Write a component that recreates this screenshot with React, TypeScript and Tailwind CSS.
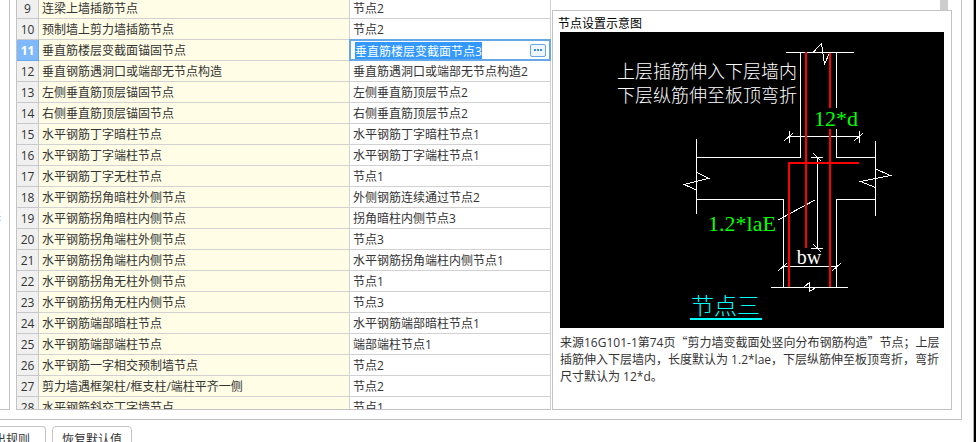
import { ReactNode, useState } from "react";
import clsx from "clsx";

interface NodeRow {
  id: number;
  name: string;
  value: string;
}

const rows: NodeRow[] = [
  { id: 9, name: "连梁上墙插筋节点", value: "节点2" },
  { id: 10, name: "预制墙上剪力墙插筋节点", value: "节点2" },
  { id: 11, name: "垂直筋楼层变截面锚固节点", value: "垂直筋楼层变截面节点3" },
  { id: 12, name: "垂直钢筋遇洞口或端部无节点构造", value: "垂直筋遇洞口或端部无节点构造2" },
  { id: 13, name: "左侧垂直筋顶层锚固节点", value: "左侧垂直筋顶层节点2" },
  { id: 14, name: "右侧垂直筋顶层锚固节点", value: "右侧垂直筋顶层节点2" },
  { id: 15, name: "水平钢筋丁字暗柱节点", value: "水平钢筋丁字暗柱节点1" },
  { id: 16, name: "水平钢筋丁字端柱节点", value: "水平钢筋丁字端柱节点1" },
  { id: 17, name: "水平钢筋丁字无柱节点", value: "节点1" },
  { id: 18, name: "水平钢筋拐角暗柱外侧节点", value: "外侧钢筋连续通过节点2" },
  { id: 19, name: "水平钢筋拐角暗柱内侧节点", value: "拐角暗柱内侧节点3" },
  { id: 20, name: "水平钢筋拐角端柱外侧节点", value: "节点3" },
  { id: 21, name: "水平钢筋拐角端柱内侧节点", value: "水平钢筋拐角端柱内侧节点1" },
  { id: 22, name: "水平钢筋拐角无柱外侧节点", value: "节点1" },
  { id: 23, name: "水平钢筋拐角无柱内侧节点", value: "节点3" },
  { id: 24, name: "水平钢筋端部暗柱节点", value: "水平钢筋端部暗柱节点1" },
  { id: 25, name: "水平钢筋端部端柱节点", value: "端部端柱节点1" },
  { id: 26, name: "水平钢筋一字相交预制墙节点", value: "节点2" },
  { id: 27, name: "剪力墙遇框架柱/框支柱/端柱平齐一侧", value: "节点2" },
  { id: 28, name: "水平钢筋斜交丁字墙节点", value: "节点1" },
];

const SELECTED_ID = 11;

function ValueEditor({ initial }: { initial: string }) {
  const [value, setValue] = useState(initial);

  return (
    <div className="absolute -inset-px flex items-center justify-between border-2 border-[#66a7e8] bg-white pr-[3px] pl-1">
      <input
        aria-label="节点"
        value={value}
        onChange={(e) => setValue(e.target.value)}
        className="field-sizing-content h-[17px] bg-[#3399ff] pt-0.5 leading-[15px] text-white outline-none"
      />
      <button
        type="button"
        aria-label="选择节点"
        className="flex h-[13px] w-4 items-center justify-center gap-px rounded-xs border border-[#66a7e8] bg-[#eef5fd]"
      >
        <span className="h-0.5 w-0.5 bg-[#3d8ee0]" />
        <span className="h-0.5 w-0.5 bg-[#3d8ee0]" />
        <span className="h-0.5 w-0.5 bg-[#3d8ee0]" />
      </button>
    </div>
  );
}

function NodeTable() {
  return (
    <div className="min-w-0 flex-1 overflow-hidden border-b border-l border-[#c3c3c3]">
      {/* scrolled slightly past the top of row 9 */}
      <table className="-mt-0.5 w-full table-fixed border-separate border-spacing-0 leading-[18px]">
        <colgroup>
          <col className="w-[22px]" />
          <col />
          <col className="w-[201px]" />
        </colgroup>
        <tbody>
          {rows.map((row) => {
            const selected = row.id === SELECTED_ID;
            return (
              <tr key={row.id}>
                <th
                  scope="row"
                  className={clsx(
                    "border-r border-b p-0 pt-0.5 text-center",
                    selected
                      ? "border-[#66a7e8] bg-[#80b9fb] font-bold text-white"
                      : "border-[#c8c8c8] bg-[#f0f0f0] font-normal"
                  )}
                >
                  {row.id}
                </th>
                <td className="border-r border-b border-[#d2d2d2] bg-[#fffde6] p-0 pt-0.5 pl-[3px] whitespace-nowrap">
                  {row.name}
                </td>
                <td className="relative h-[21px] border-r border-b border-[#d2d2d2] bg-white p-0 pt-0.5 pl-[3px] whitespace-nowrap">
                  {selected ? <ValueEditor initial={row.value} /> : row.value}
                </td>
              </tr>
            );
          })}
        </tbody>
      </table>
    </div>
  );
}

function NodeDiagram() {
  return (
    <svg
      viewBox="560 32 384 296"
      role="img"
      aria-label="节点三"
      className="block h-auto w-full bg-black"
    >
      <g fill="none" stroke="#fff" shapeRendering="crispEdges">
        {/* wall outline */}
        <path d="M786 52.5H854M800.5 52V157.5H696M836.5 52V108M836.5 129V157.5H876" />
        <path d="M696.5 139V214M875.5 141V216M697 199.5H783.5V288M876 199.5H836.5V288M771 287.5H848" />
        {/* break marks */}
        <path d="M813 52.5L821.5 43.5L824.5 64L829.5 53" />
        <path d="M696.5 172L708.5 178.5L684 184.5L696.5 190" />
        <path d="M875.5 169L890.5 175.5L860.5 181.5L875.5 187.5" />
        <path d="M804 287L809.5 282.5V291.5L815 288" />
        {/* dimensions */}
        <path d="M789 136.5H859M789.5 131V143M859.5 131V143M784 141L793 133M854 141L863 133" />
        <path d="M817.5 157V248M811 157.5H823M811 248.5H823M813 153L821 161M813 244L821 252" />
        <path d="M783 266.5H836M778 271L787 263M832 271L841 263M778 220L815 200" />
      </g>
      <g fill="none" stroke="#f00" strokeWidth="2" shapeRendering="crispEdges">
        <path d="M806 52V248M830 53V108M830 129V287M859 163H789V287" />
      </g>
      <path d="M690 319H762" stroke="#0ff" strokeWidth="2" shapeRendering="crispEdges" />
      <g className="font-['Noto_Sans_CJK_SC',sans-serif] font-light">
        <text x="617" y="78" fontSize="18" fill="#fff">上层插筋伸入下层墙内</text>
        <text x="617" y="102" fontSize="18" fill="#fff">下层纵筋伸至板顶弯折</text>
        <text x="691" y="314" fontSize="23" fill="#0ff">节点三</text>
      </g>
      <g className="font-['Liberation_Serif',serif]" fontSize="22" textAnchor="middle">
        <text x="836" y="126" fill="#0f0">12*d</text>
        <text x="742" y="231" fill="#0f0">1.2*laE</text>
        <text x="809" y="264" fontSize="20" fill="#fff">bw</text>
      </g>
    </svg>
  );
}

function NodePreview() {
  return (
    <div className="flex w-[400px] shrink-0 flex-col">
      <div className="flex h-2.5 shrink-0 justify-end pr-1">
        <div className="w-2 bg-[#cdcdcd]" />
      </div>
      <section className="min-h-0 flex-1 border border-[#c3c3c3] px-[7px]">
        <h2 className="-ml-0.5 pt-[5px] leading-4 text-black">节点设置示意图</h2>
        <NodeDiagram />
        <p className="mt-[5px] leading-[17px]">
          来源16G101-1第74页
          <span className="font-['Noto_Sans_CJK_SC',sans-serif]">“</span>
          剪力墙变截面处竖向分布钢筋构造
          <span className="font-['Noto_Sans_CJK_SC',sans-serif]">”</span>
          节点；上层插筋伸入下层墙内，长度默认为 1.2*lae，下层纵筋伸至板顶弯折，弯折尺寸默认为 12*d。
        </p>
      </section>
    </div>
  );
}

function FooterButton({ children, className }: { children: ReactNode; className?: string }) {
  return (
    <button
      type="button"
      className={clsx(
        "h-[26px] shrink-0 rounded-sm border border-[#c3c3c3] bg-white pt-0.5 whitespace-nowrap",
        className
      )}
    >
      {children}
    </button>
  );
}

export default function App() {
  return (
    <div
      lang="zh-CN"
      className="h-screen overflow-hidden border-r-2 border-black bg-white font-['Open_Sans','Noto_Sans_CJK_SC',sans-serif] text-xs text-[#333]"
    >
      <div className="flex h-full flex-col border-r border-[#b0b0b0]">
        <main className="mr-[11px] flex min-h-0 flex-1 border-r border-b border-[#c3c3c3] pr-[9px] pb-[9px]">
          <div className="mr-1.5 flex w-2.5 shrink-0 items-center justify-end overflow-hidden border-r border-b border-[#c3c3c3] pr-2 text-[#1f4fa0]">
            <span className="pt-6">差</span>
          </div>
          <NodeTable />
          <div className="w-px shrink-0" />
          <NodePreview />
        </main>
        <footer className="flex h-[22px] shrink-0 gap-1.5 overflow-hidden pt-1.5">
          <FooterButton className="flex w-[46px] items-center justify-end rounded-l-none border-l-0 pr-[15px]">
            导出规则
          </FooterButton>
          <FooterButton className="w-20">恢复默认值</FooterButton>
        </footer>
      </div>
    </div>
  );
}
